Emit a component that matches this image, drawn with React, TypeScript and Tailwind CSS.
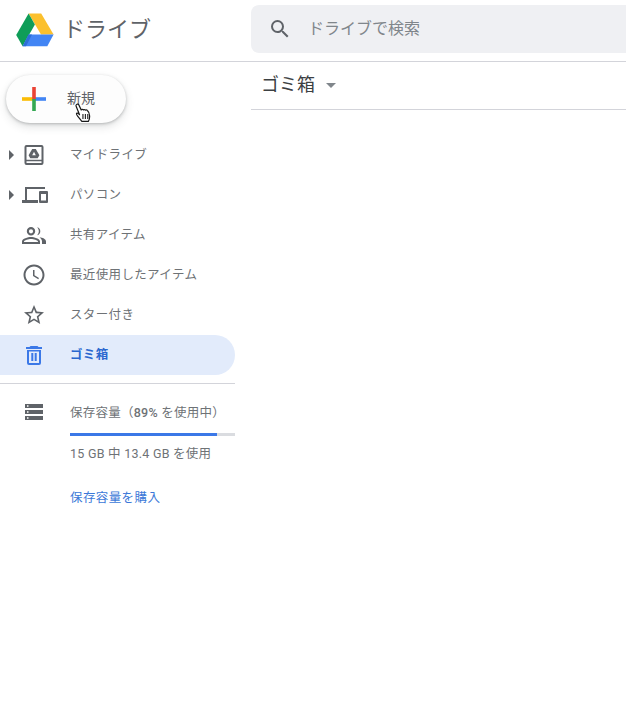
const font = { fontFamily: '"Roboto", "Noto Sans CJK JP", sans-serif' }

function DriveLogo() {
  return (
    <svg width="38" height="34" viewBox="0 0 38 34" className="shrink-0">
      <path d="M12.6 0.5 H25.2 L37.6 21.500 H25 Z" fill="#fbc02d" />
      <path d="M12.6 0.5 L18.9 11.400 L6.600 33.200 L0.200 22 Z" fill="#0f9d58" />
      <path d="M12.6 21.500 H37.600 L31.300 33.200 H6.600 Z" fill="#4285f4" />
      <path d="M12.6 21.500 L6.600 33.200 L10 33.200 L16 21.500 Z" fill="#2f6fd6" />
    </svg>
  )
}

function PlusIcon() {
  return (
    <svg width="24" height="24" viewBox="0 0 24 24" className="shrink-0">
      <rect x="0" y="10.200" width="12" height="3.600" fill="#fbbc05" />
      <rect x="12" y="10.200" width="12" height="3.600" fill="#4285f4" />
      <rect x="10.200" y="0" width="3.600" height="12" fill="#ea4335" />
      <rect x="10.200" y="12" width="3.600" height="12" fill="#34a853" />
    </svg>
  )
}

function HandCursor() {
  return (
    <svg width="17" height="19" viewBox="0 0 17 19" className="absolute left-[69px] top-[29px] scale-110">
      <path
        d="M2.200 1.200c.8-.6 1.800-.2 2.200.7l2 4.300.4-.2c.6-.3 1.300-.2 1.700.3.500-.4 1.300-.4 1.800.1.600-.3 1.300-.2 1.700.3 1.300 1 2 3 2.100 5 .1 2.200-.5 3.700-1.200 5H7L3 11.600c-.8-1-1.300-1.800-.8-2.300.5-.4 1.200-.2 2 .6l.7.7L1.800 3c-.3-.7-.1-1.400.4-1.800z"
        fill="#fff"
        stroke="#1a1a1a"
        strokeWidth="1.100"
        strokeLinejoin="round"
      />
      <path d="M8 10v4.500M10.200 10v4.500M12.400 10v4.500" stroke="#1a1a1a" strokeWidth="1" fill="none" />
    </svg>
  )
}

function MyDriveIcon() {
  return (
    <svg width="24" height="24" viewBox="0 0 24 24" fill="none">
      <path d="M4.500 3h15a1 1 0 0 1 1 1v16a1 1 0 0 1-1 1h-15a1 1 0 0 1-1-1V4a1 1 0 0 1 1-1z" stroke="#5f6368" strokeWidth="2" />
      <path d="M4 17.500h16" stroke="#5f6368" strokeWidth="1.500" />
      <path d="M10.200 6h3.600l3.600 6.200-1.700 3H8.300l-1.700-3z" fill="#5f6368" />
      <path d="M12 8.800l1.800 3.400h-3.600z" fill="#fff" />
    </svg>
  )
}

function ComputerIcon() {
  return (
    <svg width="26" height="24" viewBox="0 0 26 24" fill="#5f6368">
      <path d="M3 4h20v2H5v11h11v3H0v-3h3z" />
      <path d="M18 8h7a1 1 0 0 1 1 1v10a1 1 0 0 1-1 1h-7a1 1 0 0 1-1-1V9a1 1 0 0 1 1-1zm1 3v6.500h5V11z" fillRule="evenodd" />
    </svg>
  )
}

function PeopleIcon() {
  return (
    <svg width="24" height="24" viewBox="0 0 24 24" fill="#5f6368">
      <path d="M9 12.500a4.200 4.200 0 1 0 0-8.400 4.200 4.200 0 0 0 0 8.400zm0-6.300a2.100 2.100 0 1 1 0 4.200 2.100 2.100 0 0 1 0-4.200z" fillRule="evenodd" />
      <path d="M9 14c-3 0-9 1.500-9 4.500V21h18v-2.500C18 15.500 12 14 9 14zm-7 5v-.5c.4-1.200 4.300-2.500 7-2.500s6.600 1.300 7 2.500v.5z" fillRule="evenodd" />
      <path d="M15.200 4.200a4.200 4.200 0 0 1 0 8.100 6.200 6.200 0 0 0 0-8.100z" />
      <path d="M17.500 14.200c3 .4 6.500 1.700 6.500 4.300V21h-4v-2.500c0-1.800-1-3.200-2.500-4.300z" />
    </svg>
  )
}

function ClockIcon() {
  return (
    <svg width="24" height="24" viewBox="0 0 24 24" fill="#5f6368">
      <path d="M11.990 1.500C6.200 1.500 1.500 6.200 1.500 12s4.700 10.500 10.490 10.500C17.800 22.500 22.500 17.800 22.500 12S17.800 1.500 11.990 1.500zM12 20.500c-4.700 0-8.500-3.800-8.500-8.500S7.300 3.500 12 3.500s8.500 3.800 8.500 8.500-3.800 8.500-8.500 8.500zm.5-13.500H11v6l5.250 3.150.75-1.230-4.500-2.670z" />
    </svg>
  )
}

function StarIcon() {
  return (
    <svg width="24" height="24" viewBox="0 0 24 24" fill="#5f6368">
      <path d="M22 9.240l-7.190-.62L12 2 9.190 8.630 2 9.240l5.460 4.730L5.820 21 12 17.270 18.180 21l-1.630-7.030L22 9.240zM12 15.400l-3.760 2.270 1-4.280-3.320-2.880 4.380-.38L12 6.100l1.710 4.040 4.380.38-3.320 2.880 1 4.280L12 15.400z" />
    </svg>
  )
}

function TrashIcon() {
  return (
    <svg width="24" height="24" viewBox="0 0 24 24" fill="#3b78e7">
      <path d="M8.500 3h7l1 1H20v2H4V4h3.500z" />
      <path d="M5 7h14v13a2 2 0 0 1-2 2H7a2 2 0 0 1-2-2zm2 1.500V20h10V8.500z" fillRule="evenodd" />
      <path d="M9.300 10h2v8h-2zM12.700 10h2v8h-2z" />
    </svg>
  )
}

function StorageIcon() {
  return (
    <svg width="24" height="24" viewBox="0 0 24 24" fill="#5f6368">
      <path d="M3 4h18v4H3zm2 1.300v1.400h1.500V5.300z" fillRule="evenodd" />
      <path d="M3 10h18v4H3zm2 1.300v1.400h1.500v-1.400z" fillRule="evenodd" />
      <path d="M3 16h18v4H3zm2 1.300v1.400h1.500v-1.400z" fillRule="evenodd" />
    </svg>
  )
}

const items = [
  { label: 'マイドライブ', icon: MyDriveIcon, caret: true },
  { label: 'パソコン', icon: ComputerIcon, caret: true },
  { label: '共有アイテム', icon: PeopleIcon },
  { label: '最近使用したアイテム', icon: ClockIcon },
  { label: 'スター付き', icon: StarIcon },
  { label: 'ゴミ箱', icon: TrashIcon, active: true },
]

export default function App() {
  return (
    <div className="flex h-[712px] w-[626px] flex-col overflow-hidden bg-white" style={font}>
      <header className="flex h-[62px] shrink-0 items-center border-b border-[#d3d4da]">
        <div className="flex w-[251px] shrink-0 items-center pl-4 pb-0.5">
          <DriveLogo />
          <span className="ml-[9px] text-[22px] leading-7 text-[#5f6368]">ドライブ</span>
        </div>
        <div className="mb-1 flex h-12 flex-1 items-center rounded-l-lg bg-[#eff0f3] pl-[17px]">
          <svg width="24" height="24" viewBox="0 0 24 24" fill="#5f6368">
            <path d="M15.500 14h-.79l-.28-.27A6.471 6.471 0 0 0 16 9.500 6.500 6.500 0 1 0 9.500 16c1.610 0 3.090-.59 4.230-1.570l.27.28v.79l5 4.990L20.490 19l-4.990-5zm-6 0C7.010 14 5 11.990 5 9.500S7.010 5 9.500 5 14 7.010 14 9.500 11.990 14 9.500 14z" />
          </svg>
          <span className="ml-4 text-base text-[#80868b]">ドライブで検索</span>
        </div>
      </header>

      <div className="flex flex-1">
        <aside className="w-[251px] shrink-0 pr-4">
          <div className="relative mt-[13px] ml-1.5 flex h-12 w-[120px] items-center rounded-full bg-[#fdfdfd] pl-4 shadow-[0_1px_3px_rgba(60,64,67,0.3),0_4px_8px_rgba(60,64,67,0.15)]">
            <PlusIcon />
            <span className="mb-0.5 ml-[21px] text-sm text-[#5f6368]">新規</span>
            <HandCursor />
          </div>

          <ul className="mt-3">
            {items.map(({ label, icon: Icon, caret, active }) => (
              <li
                key={label}
                className={`relative flex h-10 items-center rounded-r-full ${active ? 'bg-[#e2ebfb]' : ''}`}
              >
                {caret && (
                  <span className="absolute left-[9px] top-[15px] h-0 w-0 border-y-[5px] border-l-[5px] border-y-transparent border-l-[#5f6368]" />
                )}
                <span className="flex w-[70px] shrink-0 justify-start pl-[22px]">
                  <Icon />
                </span>
                <span className={`text-[12.500px] tracking-[0.35px] ${active ? 'font-bold text-[#2a67cf]' : 'text-[#6e7276]'}`}>
                  {label}
                </span>
              </li>
            ))}
          </ul>

          <div className="mt-2 border-t border-[#d3d4da]">
            <div className="flex">
              <span className="flex w-[70px] shrink-0 pl-[22px] pt-4">
                <StorageIcon />
              </span>
              <div className="flex-1">
                <p className="mt-[21px] text-[12.500px] leading-4 tracking-[0.25px] text-[#6e7276]">
                  保存容量（<span className="font-medium">89%</span> を使用中）
                </p>
                <div className="mt-3 h-[3px] w-full bg-[#dadce0]">
                  <div className="h-full bg-[#3b78e7]" style={{ width: '89%' }} />
                </div>
                <p className="mt-2.5 text-[12.500px] leading-4 tracking-[0.25px] text-[#6e7276]">15 GB 中 13.4 GB を使用</p>
                <p className="mt-7 text-[12.500px] leading-4 tracking-[0.4px] text-[#3b78d8]">保存容量を購入</p>
              </div>
            </div>
          </div>
        </aside>

        <main className="flex-1">
          <div className="flex h-12 items-center border-b border-[#d3d4da] pl-2.5">
            <span className="mb-0.5 text-lg leading-6 text-[#3c4043]">ゴミ箱</span>
            <span className="ml-[11px] h-0 w-0 border-x-[5px] border-t-[5px] border-x-transparent border-t-[#80868b]" />
          </div>
        </main>
      </div>
    </div>
  )
}
